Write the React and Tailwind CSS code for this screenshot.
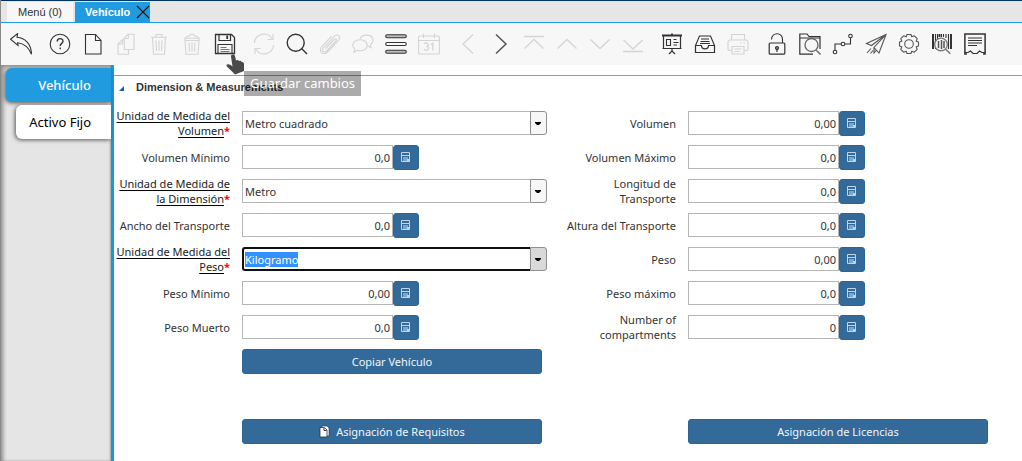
import { useEffect, useRef } from "react";

const icons = {
  undo: <path d="M.5 6.2 7.6.6 7 4.3C15 5 21.3 10.5 21.5 21.3 18.6 14 13.6 10.4 7.6 9.7L8 12.4Z" />,
  help: (
    <>
      <circle cx="11" cy="11" r="9.8" />
      <path d="M8.2 8.6c0-4 5.8-3.9 5.8-.4 0 2.2-2.8 2.2-2.8 4.8" strokeWidth="1.4" />
      <path d="M11.2 14.6v1.6" strokeWidth="1.4" />
    </>
  ),
  file: <path d="M3.5 1.5h10l5.5 6v13.5H3.5ZM13.5 1.5v6H19" />,
  copy: (
    <>
      <path d="M13.5 16.5v4.8H3V11l4.5-4.2h1.8M7.5 6.8V11H3" />
      <path d="M13 1.3h6v15.2H9.3V5.2ZM13.3 1.3v4.2h-4" />
    </>
  ),
  trash: (
    <>
      <path d="M3 4.3h16M8 4.3V1.5h6v2.8M4.5 4.3l1 16.9h11l1-16.9" />
      <path d="M8 7.5 8.5 18M11 7.5V18M14 7.5 13.5 18" />
    </>
  ),
  trashAll: (
    <>
      <path d="M4 7.5h14l-1 13.7H5ZM4 7.5V5l2.5-2h2l1-1.8h3l1 1.8h2L18 5v2.5" />
      <path d="M5 5.2h12M8 9.5l.5 9M11 9.5v9M14 9.5l-.5 9" />
    </>
  ),
  save: (
    <>
      <path d="M1.5 1.5h16l3 3v16h-19Z" strokeWidth="1.3" />
      <path d="M5 1.5v6h11.5v-6" strokeWidth="1.2" />
      <path d="M13.2 2.5V6" strokeWidth="1.8" />
      <path d="M4 20.5v-9h14v9" />
      <path d="M6.5 14.5h6M6.5 16.5h9M6.5 18.5h9" stroke="#777" strokeWidth="1.2" />
    </>
  ),
  refresh: (
    <>
      <path d="M1.5 10A9.5 9.5 0 0 1 19 5.5M20 1v5.5h-5.5" />
      <path d="M20.5 12A9.5 9.5 0 0 1 3 16.5M2 21v-5.5h5.5" />
    </>
  ),
  search: (
    <>
      <circle cx="9.7" cy="9.7" r="8.5" strokeWidth="1.4" />
      <path d="m15.8 15.8 5.2 5.2" strokeWidth="1.4" />
    </>
  ),
  clip: <path d="M6.5 15.5 15 6.5c1.7-1.7 3.3 0 1.8 1.6L7.5 18c-2.8 2.7-5.6-.4-3-3.2L15 3.5c3.7-3.8 7.6.6 4.2 4.2L9 18.5c-4.5 4.8-10.3.3-6.2-4.8L12.5 3.2" />,
  chat: (
    <>
      <path d="M8 6.5C9 .5 21 .5 21 7.2c0 2-1 3.4-2.5 4.5l.5 3-3.5-2" />
      <path d="M8.2 6.8c9.3 0 9.3 11 0 11-1 0-2-.2-2.8-.5l-3.6 2 1-3.6C-1.5 12.5 1.5 6.8 8.2 6.8Z" />
    </>
  ),
  rows: (
    <>
      <rect x=".7" y="1.7" width="20.6" height="3" rx="1.5" fill="#bbb" />
      <rect x=".7" y="9.5" width="20.6" height="3" rx="1.5" />
      <rect x=".7" y="17.3" width="20.6" height="3" rx="1.5" fill="#bbb" />
    </>
  ),
  calendar: (
    <>
      <rect x=".6" y="3" width="20.8" height="18" rx="1" />
      <path d="M.6 7.5h20.8M5.5.5V5M16.5.5V5" />
      <path d="M6.3 11c1-1.6 4-1.2 4 .7 0 1.3-1.2 1.7-2 1.7 1 0 2.3.5 2.3 1.9 0 2.3-3.7 2.7-4.5.6M12.8 11.7l2-1.5v7.3" strokeWidth="1.3" />
    </>
  ),
  left: <path d="M16 1.5 6 11l10 9.5" strokeWidth="1.3" />,
  right: <path d="M6 1.5 16 11 6 20.5" stroke="#555" strokeWidth="1.5" />,
  first: <path d="M1 3.5h20M1.5 15.5l9.5-9 9.5 9" strokeWidth="1.3" />,
  up: <path d="M1.5 15.5l9.5-9 9.5 9" strokeWidth="1.3" />,
  down: <path d="M1.5 6.5l9.5 9 9.5-9" strokeWidth="1.3" />,
  last: <path d="M1.5 7l9.5 9 9.5-9M1 18.5h20" strokeWidth="1.3" />,
  board: (
    <>
      <path d="M1 2.5h20M11 .5v2" strokeWidth="1.8" />
      <path d="M2.5 3v12.5h17V3M1.5 15.5h19M11 15.5V18l-3 3M11 18l3 3" strokeWidth="1.2" />
      <path d="M5.5 6.5h4v6h-4ZM12.5 6.5h3M12.5 9.5h5M12.5 12h3.5" />
    </>
  ),
  tray: (
    <>
      <path d="M1.5 12.5h6c0 4.5 7 4.5 7 0h6v7h-19Z" strokeWidth="1.2" />
      <path d="M1.5 12.5 5.5 3h11l4 9.5M7 6h8M6.5 8.5h9M6 10.5h10" />
    </>
  ),
  printer: (
    <>
      <path d="M4.5 7V1.5h13V7M4.5 17.5H2l-1-1v-8L2.5 7h17L21 8.5v8l-1 1h-2.5" />
      <path d="M5 13.5h12V21H5ZM7.5 16h7M7.5 18.5h5M13 10h1.5M16.5 10H18" />
    </>
  ),
  lock: (
    <>
      <path d="M5.5 6.5C5.800-1 16.5-1.5 16.5 6.5V10" />
      <rect x="3.2" y="10" width="15.6" height="11.2" rx="1" strokeWidth="1.2" />
      <path d="M11 16v3" strokeWidth="1.2" />
      <circle cx="11" cy="15" r="1.5" fill="#888" />
    </>
  ),
  folder: (
    <>
      <path d="M21 16V3.5H10L8 1H.8v20.2H14M1 5h20" strokeWidth="1.2" />
      <circle cx="12.5" cy="12" r="6.5" stroke="#666" strokeWidth="1.3" />
      <path d="m17 17 4.5 4.5" stroke="#777" strokeWidth="1.6" />
    </>
  ),
  flow: (
    <>
      <circle cx="3" cy="19" r="1.8" />
      <circle cx="11" cy="11" r="1.8" />
      <circle cx="18.5" cy="3" r="1.8" />
      <path d="M3 17v-6h6M13 11h5.5V5" />
    </>
  ),
  send: (
    <>
      <path d="M21 1.5l-19.5 9 5 2L21 1.5l-12 13 5 5.500ZM9 14.5V20l2.5-3" stroke="#555" />
      <path d="m2 20 4-4.5M5.5 20.5l2.500-3" stroke="#555" />
    </>
  ),
  gear: (
    <>
      <path
        d="M9 1.5h4l.8 2.3 2.5-1 2.9 2.9-1 2.5 2.3.8v4l-2.3.8 1 2.5-2.9 2.9-2.5-1-.8 2.3H9l-.8-2.3-2.5 1-2.9-2.9 1-2.5L1.5 13V9l2.3-.8-1-2.5 2.9-2.9 2.5 1Z"
        stroke="#555"
        strokeLinejoin="round"
      />
      <circle cx="11" cy="11" r="4.3" stroke="#555" />
    </>
  ),
  barcode: (
    <>
      <path d="M2 1v15M20 1v15" strokeWidth="2" />
      <path d="M4.5 1v15M15 1v4M17.5 1v15M6.5 1v5M10.5 1v3M12.5 1v3" />
      <path d="M8.5 1v3" strokeWidth="2" />
      <circle cx="10" cy="11.5" r="6.3" fill="#f7f7f7" stroke="#777" strokeWidth="1.3" />
      <path d="M7.5 8v7M10.5 7v9M13 8v7" stroke="#555" strokeWidth="1.5" />
      <path d="m14.8 16.3 4.5 4.5" stroke="#777" strokeWidth="1.5" />
    </>
  ),
  report: (
    <>
      <path d="M3 21H.9V.9h20.2V21H19" strokeWidth="1.5" />
      <path d="M4 5h14M4 7.5h14M4 10h14M4 12.5h9" strokeWidth="1.2" />
      <path d="M1 19.5h3L6.5 18 9 20.5h4l2.5-2.5 2.5 1.5h3" strokeWidth="1.2" />
    </>
  ),
};

const groups = [
  [["undo", "Deshacer"]],
  [
    ["help", "Ayuda"],
    ["file", "Nuevo"],
    ["copy", "Copiar", true],
    ["trash", "Eliminar", true],
    ["trashAll", "Eliminar selección", true],
    ["save", "Guardar cambios"],
  ],
  [
    ["refresh", "Refrescar", true],
    ["search", "Buscar"],
    ["clip", "Adjunto", true],
    ["chat", "Chat", true],
    ["rows", "Cambiar vista"],
    ["calendar", "Calendario", true],
  ],
  [
    ["left", "Padre", true],
    ["right", "Detalle"],
    ["first", "Primero", true],
    ["up", "Anterior", true],
    ["down", "Siguiente", true],
    ["last", "Último", true],
  ],
  [
    ["board", "Informe"],
    ["tray", "Archivo"],
    ["printer", "Imprimir", true],
  ],
  [
    ["lock", "Bloquear"],
    ["folder", "Zoom"],
    ["flow", "Flujo de trabajo"],
    ["send", "Solicitudes"],
    ["gear", "Proceso"],
    ["barcode", "Producto"],
    ["report", "Personalizar"],
  ],
];

function ToolButton({ name, label, disabled }) {
  return (
    <button
      type="button"
      aria-label={label}
      disabled={disabled}
      className="flex h-10 w-[33px] items-center justify-center text-[#333] disabled:text-[#d4d4d4]"
    >
      <svg width="22" height="22" viewBox="0 0 22 22" fill="none" stroke="currentColor" strokeWidth="1.1" aria-hidden="true">
        {icons[name]}
      </svg>
    </button>
  );
}

function FieldLabel({ id, mandatory, children }) {
  return (
    <div className="pr-3 text-right">
      <label htmlFor={id} className="text-[#333]">
        <span className={mandatory ? "text-[#222] underline decoration-black underline-offset-2" : ""}>{children}</span>
        {mandatory && <span className="font-bold text-[#f00]">*</span>}
      </label>
    </div>
  );
}

function Combo({ id, label, value, active }) {
  const ref = useRef(null);
  useEffect(() => {
    if (active && ref.current) {
      ref.current.focus();
      ref.current.select();
    }
  }, [active]);
  return (
    <>
      <FieldLabel id={id} mandatory>{label}</FieldLabel>
      <div className="flex h-6 w-[96%]">
        <input
          id={id}
          ref={ref}
          role="combobox"
          aria-expanded="false"
          defaultValue={value}
          className={
            "min-w-0 flex-1 pt-px text-[#333] outline-none selection:bg-[#3390ff] selection:text-white " +
            (active ? "rounded-l-[3px] border-2 border-r-0 border-[#101010] pl-px" : "border border-r-0 border-[#b5b5b5] pl-0.5")
          }
        />
        <button
          type="button"
          aria-label={"Abrir " + label}
          className={
            "flex w-[17px] items-center justify-center rounded-r-[3px] border border-[#8f8f8f] " +
            (active ? "bg-[#d9d9d9]" : "bg-[#f7f7f7]")
          }
        >
          <svg width="7" height="3" viewBox="0 0 7 3" aria-hidden="true">
            <path d="M0 0h6v1L4 3H2L0 1Z" />
          </svg>
        </button>
      </div>
    </>
  );
}

function NumberField({ id, label, value }) {
  return (
    <>
      <FieldLabel id={id}>{label}</FieldLabel>
      <div className="flex">
        <input
          id={id}
          inputMode="decimal"
          defaultValue={value}
          className="h-6 w-[151px] min-w-0 border border-[#b5b5b5] pr-0.5 pt-px text-right text-[#333] outline-none"
        />
        <button
          type="button"
          aria-label={"Calculadora " + label}
          className="flex h-[25px] w-[26px] items-center justify-center rounded-[3px] border border-[#2b6594] bg-[#336a99]"
        >
          <svg width="10" height="11" viewBox="0 0 10 11" aria-hidden="true">
            <path d="M.5.5h8v9h-8Z" fill="#336a99" stroke="#c3d5e5" />
            <path d="M1 3.500h7" stroke="#c3d5e5" />
            <path d="M2 5h5v4H2Z" fill="#7fa5c6" />
            <path d="M6 7h2v2H6Z" fill="#c3d5e5" />
          </svg>
        </button>
      </div>
    </>
  );
}

function ActionButton({ children }) {
  return (
    <button
      type="button"
      className="flex h-[25px] w-[300px] max-w-full items-center justify-center gap-1.5 rounded-[3px] border border-[#2b6594] bg-[#336a99] text-[#f2f6fa]"
    >
      {children}
    </button>
  );
}

const GRID = "grid grid-cols-[128fr_318fr_128fr_318fr_16fr] items-center";

const rows = [
  [["volUom", "Unidad de Medida del Volumen", "Metro cuadrado", "combo"], ["vol", "Volumen", "0,00"]],
  [["volMin", "Volumen Mínimo", "0,0"], ["volMax", "Volumen Máximo", "0,0"]],
  [["dimUom", "Unidad de Medida de la Dimensión", "Metro", "combo"], ["length", "Longitud de Transporte", "0,0"]],
  [["width", "Ancho del Transporte", "0,0"], ["height", "Altura del Transporte", "0,0"]],
  [["weightUom", "Unidad de Medida del Peso", "Kilogramo", "active"], ["weight", "Peso", "0,00"]],
  [["weightMin", "Peso Mínimo", "0,00"], ["weightMax", "Peso máximo", "0,0"]],
  [["dead", "Peso Muerto", "0,0"], ["compartments", "Number of compartments", "0"]],
];

function Field({ data }) {
  const [id, label, value, kind] = data;
  return kind ? <Combo id={id} label={label} value={value} active={kind === "active"} /> : <NumberField id={id} label={label} value={value} />;
}

export default function App() {
  return (
    <div className="flex min-h-screen flex-col border-l border-l-[#888] bg-white font-['Noto_Sans',sans-serif] text-[11px] leading-[15px]">
      <div className="h-px bg-[#003366]" />
      <div role="tablist" className="flex h-[22px] items-end gap-0.5 border-b border-[#1f9ade] bg-[#e6e6e6] pl-1.5 font-['Liberation_Sans',sans-serif]">
        <button type="button" role="tab" aria-selected="false" className="h-5 bg-[#f7f7f7] px-[11px] text-[#333]">
          Menú (0)
        </button>
        <div className="flex h-5 items-center gap-1.5 bg-[#219bdf] pl-2.5">
          <button type="button" role="tab" aria-selected="true" className="font-bold text-white">
            Vehículo
          </button>
          <button type="button" aria-label="Cerrar" className="text-[#111]">
            <svg width="14" height="14" viewBox="0 0 14 14" fill="none" stroke="currentColor" strokeWidth="1.1" aria-hidden="true">
              <path d="m1 1 12 12M13 1 1 13" />
            </svg>
          </button>
        </div>
      </div>

      <div role="toolbar" className="relative flex h-[42px] items-center gap-1.5 bg-[#f7f7f7] pl-[3px]">
        {groups.map((group, i) => (
          <div key={i} className="flex">
            {group.map(([name, label, disabled]) => (
              <ToolButton key={name} name={name} label={label} disabled={disabled} />
            ))}
          </div>
        ))}
        <svg className="absolute left-[225px] top-[31px] z-20" width="19" height="21" viewBox="0 0 19 21" aria-hidden="true">
          <path
            d="M5 2.5C4.5.3 8.3-.2 9 2l1 4.500c1-1 2.700-.5 3 .7 1-.9 2.500-.1 2.800 1 1.200-.5 2.200.7 2.200 2V17l-9 3.500C6 17.500 3.500 15 .5 12c-.3-2.500 3.500-2.300 6 .5Z"
            fill="#4a4a4a"
          />
        </svg>
        <div role="tooltip" className="absolute left-[243px] top-12 z-10 bg-black/33 px-1.5 py-[3px] text-[13px] leading-[19px] text-white">
          Guardar cambios
        </div>
      </div>

      <div className="flex flex-1">
        <nav className="flex w-[113px] shrink-0 flex-col items-end gap-[3px] border-r-[3px] border-[#0f9bdc] bg-[#e5e5e5] pt-[3px] shadow-[inset_2px_2px_4px_#888,inset_-1px_0_2px_#aaa]">
          <a href="#vehiculo" className="flex h-[34px] w-[105px] items-center justify-end rounded-l-md bg-[#219bdf] pr-5 text-[13px] font-medium text-white shadow-[-1px_1px_4px_#555]">
            Vehículo
          </a>
          <a href="#activo" className="flex h-[34px] w-[95px] items-center justify-end rounded-l-md bg-white pr-5 text-[13px] text-black shadow-[-1px_1px_4px_#555]">
            Activo Fijo
          </a>
        </nav>

        <main className="min-w-0 flex-1 pb-3 pt-2.5">
          <div className="flex h-[31px] items-start gap-3 border-t border-[#999] pl-[5px]">
            <svg width="5" height="5" viewBox="0 0 5 5" className="mt-2.5" aria-hidden="true">
              <path d="M5 0v5H0Z" fill="#0a62c9" />
            </svg>
            <h2 className="mt-1 font-['Liberation_Sans',sans-serif] font-bold text-[#333]">Dimension &amp; Measurements</h2>
          </div>
          {rows.map(([a, b]) => (
            <div key={a[0]} className={GRID + " h-[34px]"}>
              <Field data={a} />
              <Field data={b} />
            </div>
          ))}
          <div className={GRID + " h-[34px]"}>
            <div className="col-start-2">
              <ActionButton>Copiar Vehículo</ActionButton>
            </div>
          </div>
          <div className={GRID + " mt-9 h-[34px]"}>
            <div className="col-start-2">
              <ActionButton>
                <svg width="11" height="13" viewBox="0 0 11 13" aria-hidden="true">
                  <path d="M3 1h5l2 2v8H3Z" fill="#fff" stroke="#234" strokeWidth=".6" />
                  <path d="M1 2.5h4.5L8 5v7H1Z" fill="#fff" stroke="#234" strokeWidth=".8" />
                  <path d="M5 3v2.5h2.5" fill="none" stroke="#234" />
                </svg>
                Asignación de Requisitos
              </ActionButton>
            </div>
            <div className="col-start-4">
              <ActionButton>Asignación de Licencias</ActionButton>
            </div>
          </div>
        </main>
      </div>
    </div>
  );
}
